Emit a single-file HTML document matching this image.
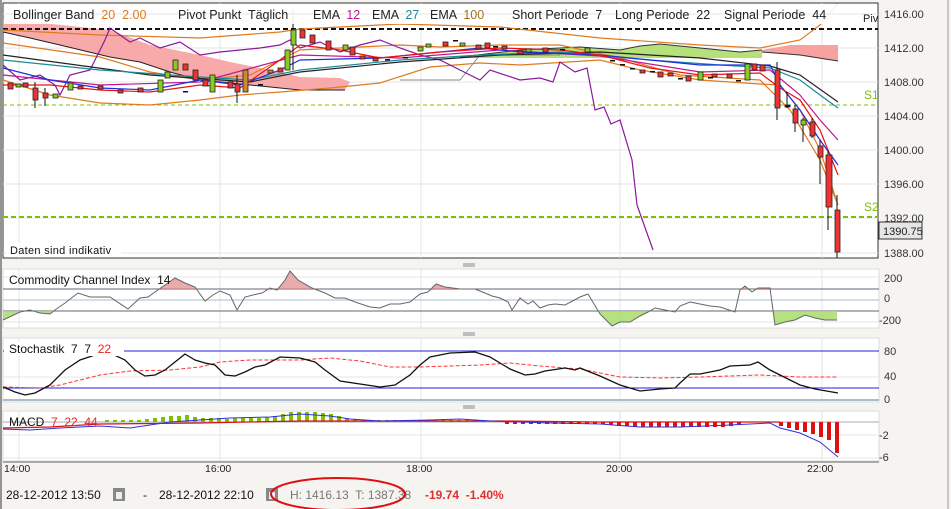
<!DOCTYPE html>
<html><head><meta charset="utf-8"><style>
body{margin:0;width:951px;height:509px;overflow:hidden;background:#f5f4f0;font-family:"Liberation Sans",sans-serif}
svg{position:absolute;left:0;top:0}
text{font-family:"Liberation Sans",sans-serif;white-space:pre}
</style></head><body>
<svg width="951" height="509" viewBox="0 0 951 509" xml:space="preserve">
<defs>
<clipPath id="cg"><rect x="3" y="311" width="876" height="20"/></clipPath>
<clipPath id="cr"><rect x="3" y="265" width="876" height="24"/></clipPath>
</defs>
<rect x="0" y="0" width="951" height="509" fill="#f5f4f0"/>
<line x1="1" y1="0" x2="1" y2="509" stroke="#333"/>
<line x1="948" y1="0" x2="948" y2="509" stroke="#999"/>
<rect x="3" y="3" width="875" height="255" fill="#fff" stroke="#333"/>
<g stroke="#e4e4e4" stroke-width="1">
<line x1="3" y1="14" x2="878" y2="14"/><line x1="3" y1="48" x2="878" y2="48"/><line x1="3" y1="82" x2="878" y2="82"/><line x1="3" y1="116" x2="878" y2="116"/><line x1="3" y1="150" x2="878" y2="150"/><line x1="3" y1="184" x2="878" y2="184"/><line x1="3" y1="218" x2="878" y2="218"/><line x1="3" y1="253" x2="878" y2="253"/>
<line x1="19" y1="3" x2="19" y2="258"/><line x1="220" y1="3" x2="220" y2="258"/><line x1="421" y1="3" x2="421" y2="258"/><line x1="620" y1="3" x2="620" y2="258"/><line x1="822" y1="3" x2="822" y2="258"/>
</g>
<polygon points="3,19 110,30 150,45 200,55 230,62 270,70 300,77 340,78 350,82 345,90 300,90 240,84 200,80 170,72 140,62 110,57 60,45 30,38 3,32" fill="#f7a1a1" opacity="0.9"/>
<polyline points="3,32 30,38 60,45 110,57 140,62 170,72 200,80 240,84 300,90 345,90" fill="none" stroke="#222"/>
<polygon points="460,57 520,50 580,47 620,50 640,46 660,44 700,48 740,52 762,50 762,58 700,58 600,58 500,58 470,58" fill="#b5e07a"/>
<polyline points="460,57 520,50 580,47 620,50 640,46 660,44 700,48 740,52 762,50" fill="none" stroke="#333"/>
<polygon points="762,50 790,45 838,45 838,61 800,55 762,52" fill="#f7a1a1"/>
<polyline points="762,52 800,55 838,61" fill="none" stroke="#333"/>
<polyline points="400,80 460,80 480,55 560,55" fill="none" stroke="#888"/>
<line x1="3" y1="29" x2="878" y2="29" stroke="#111" stroke-width="2" stroke-dasharray="5,3"/>
<line x1="3" y1="105" x2="878" y2="105" stroke="#7cc200" stroke-dasharray="4,3"/>
<line x1="3" y1="217" x2="878" y2="217" stroke="#7cc200" stroke-width="2" stroke-dasharray="5,3"/>
<g fill="none" stroke-width="1.2">
<polyline stroke="#e07a20" points="3,30 100,35 200,38 280,32 300,29 400,24 500,27 600,38 700,45 760,48 800,40 820,25 838,3"/>
<polyline stroke="#e07a20" points="3,80 50,95 100,103 150,105 200,100 240,95 280,92 330,88 380,83 430,67 480,63 520,65 600,60 640,70 700,80 760,84 780,85 800,110 820,150 838,205"/>
<polyline stroke="#e07a20" points="3,43 100,57 150,72 200,80 250,75 280,60 300,50 400,45 440,47 500,45 560,45 620,58 680,75 760,80 790,110 820,160 838,205"/>
<polyline stroke="#8a1a9a" points="3,65 20,80 40,75 55,85 60,95 70,75 90,70 105,40 110,28 130,42 140,38 160,48 180,42 200,55 220,52 240,50 260,48 280,45 290,40 300,48 320,42 340,52 360,45 380,40 400,48 420,55 440,60 460,70 480,80 490,70 520,80 540,78 553,82 560,62 575,72 587,68 595,110 604,107 611,124 620,120 632,160 637,205 653,250"/>
<polyline stroke="#222" points="3,55 150,75 250,82 300,72 400,62 500,55 600,52 700,58 770,66 800,75 838,102"/>
<polyline stroke="#1a8a9a" points="3,60 100,70 200,77 250,80 300,70 400,60 480,55 560,52 650,60 720,65 770,68 800,80 820,95 838,108"/>
<polyline stroke="#c0188a" points="3,75 100,85 200,82 300,55 400,58 500,50 600,56 700,72 770,70 800,95 820,120 838,140"/>
<polyline stroke="#2030e0" points="3,68 50,80 100,88 150,90 200,80 240,85 280,70 300,60 380,58 440,52 480,48 520,52 600,55 700,65 770,65 780,85 800,110 820,140 838,165"/>
<polyline stroke="#ee1111" points="3,85 50,85 100,90 150,92 200,85 240,88 280,60 300,45 340,50 380,58 440,52 500,48 560,50 600,55 650,68 700,75 760,73 780,88 800,100 820,130 838,175"/>
</g>
<g stroke="#111" stroke-width="1">
<line x1="35" y1="82" x2="35" y2="108"/><line x1="45" y1="88" x2="45" y2="106"/><line x1="237" y1="75" x2="237" y2="103"/><line x1="293" y1="10" x2="293" y2="70"/><line x1="777" y1="62" x2="777" y2="120"/><line x1="787" y1="92" x2="787" y2="108"/><line x1="795" y1="105" x2="795" y2="132"/><line x1="803" y1="118" x2="803" y2="142"/><line x1="812" y1="118" x2="812" y2="138"/><line x1="820" y1="140" x2="820" y2="184"/><line x1="828" y1="150" x2="828" y2="230"/><line x1="837" y1="195" x2="837" y2="258"/>
</g>
<g stroke="#222" stroke-width="0.8">
<rect x="8" y="83" width="5" height="6" fill="#e33"/><rect x="16" y="84" width="5" height="3" fill="#8c2"/><rect x="23" y="83" width="5" height="4" fill="#e33"/><rect x="33" y="88" width="5" height="12" fill="#e33"/><rect x="43" y="93" width="5" height="5" fill="#e33"/><rect x="53" y="94" width="5" height="4" fill="#8c2"/><rect x="68" y="83" width="5" height="7" fill="#8c2"/><rect x="78" y="86" width="5" height="3" fill="#e33"/><rect x="98" y="86" width="5" height="3" fill="#e33"/><rect x="118" y="90" width="5" height="3" fill="#e33"/><rect x="138" y="88" width="5" height="4" fill="#e33"/><rect x="158" y="80" width="5" height="12" fill="#8c2"/><rect x="165" y="72" width="5" height="6" fill="#8c2"/><rect x="173" y="60" width="5" height="10" fill="#8c2"/><rect x="183" y="64" width="5" height="6" fill="#e33"/><rect x="193" y="70" width="5" height="10" fill="#e33"/><rect x="203" y="80" width="5" height="6" fill="#e33"/><rect x="210" y="75" width="5" height="17" fill="#8c2"/><rect x="228" y="82" width="5" height="6" fill="#e33"/><rect x="235" y="84" width="5" height="8" fill="#e33"/><rect x="243" y="70" width="5" height="22" fill="#c83"/><rect x="268" y="70" width="5" height="3" fill="#c83"/><rect x="278" y="68" width="5" height="4" fill="#e33"/><rect x="285" y="50" width="5" height="20" fill="#8c2"/><rect x="291" y="30" width="5" height="15" fill="#8c2"/><rect x="300" y="30" width="5" height="8" fill="#e33"/><rect x="310" y="35" width="5" height="8" fill="#e33"/><rect x="326" y="41" width="5" height="9" fill="#e33"/><rect x="343" y="45" width="5" height="5" fill="#8c2"/><rect x="350" y="47" width="5" height="8" fill="#e33"/><rect x="360" y="56" width="5" height="3" fill="#e33"/><rect x="373" y="58" width="5" height="3" fill="#e33"/><rect x="418" y="47" width="5" height="4" fill="#8c2"/><rect x="426" y="44" width="5" height="3" fill="#8c2"/><rect x="443" y="42" width="5" height="4" fill="#e33"/><rect x="460" y="43" width="5" height="3" fill="#8c2"/><rect x="476" y="45" width="5" height="4" fill="#e33"/><rect x="485" y="43" width="5" height="5" fill="#e33"/><rect x="502" y="46" width="5" height="3" fill="#e33"/><rect x="518" y="51" width="5" height="3" fill="#e33"/><rect x="526" y="49" width="5" height="3" fill="#8c2"/><rect x="543" y="48" width="5" height="4" fill="#e33"/><rect x="585" y="48" width="5" height="4" fill="#8c2"/><rect x="640" y="70" width="5" height="3" fill="#e33"/><rect x="658" y="72" width="5" height="5" fill="#e33"/><rect x="668" y="73" width="5" height="3" fill="#e33"/><rect x="686" y="76" width="5" height="5" fill="#e33"/><rect x="698" y="72" width="5" height="8" fill="#8c2"/><rect x="712" y="74" width="5" height="3" fill="#e33"/><rect x="727" y="74" width="5" height="4" fill="#e33"/><rect x="745" y="64" width="5" height="16" fill="#8c2"/><rect x="752" y="64" width="5" height="6" fill="#e33"/><rect x="760" y="65" width="5" height="6" fill="#e33"/><rect x="775" y="70" width="5" height="38" fill="#e33"/><rect x="785" y="105" width="5" height="2" fill="#111"/><rect x="793" y="109" width="5" height="14" fill="#e33"/><rect x="801" y="120" width="5" height="5" fill="#8c2"/><rect x="810" y="122" width="5" height="14" fill="#e33"/><rect x="818" y="146" width="5" height="11" fill="#e33"/><rect x="826" y="155" width="6" height="52" fill="#e33"/><rect x="835" y="210" width="5" height="42" fill="#e33"/>
</g>
<g fill="#111"><rect x="183" y="91" width="5" height="1.5"/><rect x="258" y="84" width="5" height="1.5"/><rect x="385" y="59" width="5" height="1.5"/><rect x="403" y="57" width="5" height="1.5"/><rect x="453" y="40" width="5" height="1.5"/><rect x="493" y="46" width="5" height="1.5"/><rect x="560" y="49" width="5" height="1.5"/><rect x="610" y="60" width="5" height="1.5"/><rect x="620" y="64" width="5" height="1.5"/><rect x="630" y="68" width="5" height="1.5"/><rect x="650" y="71" width="5" height="1.5"/><rect x="678" y="78" width="5" height="1.5"/><rect x="708" y="77" width="5" height="1.5"/><rect x="736" y="80" width="5" height="1.5"/></g>
<rect x="4" y="4" width="856" height="20" fill="#fff" opacity="0.9"/>
<line x1="4" y1="14" x2="860" y2="14" stroke="#e4e4e4"/>
<g font-size="12.5" fill="#222">
<text x="13" y="19">Bollinger Band  <tspan fill="#e07a20">20  2.00</tspan></text>
<text x="178" y="19">Pivot Punkt  Täglich</text>
<text x="313" y="19">EMA  <tspan fill="#c0188a">12</tspan></text>
<text x="372" y="19">EMA  <tspan fill="#1a8a9a">27</tspan></text>
<text x="430" y="19">EMA  <tspan fill="#a0701a">100</tspan></text>
<text x="512" y="19">Short Periode  7</text>
<text x="615" y="19">Long Periode  22</text>
<text x="724" y="19">Signal Periode  44</text>
</g>
<text x="863" y="22" font-size="11" fill="#222">Piv</text>
<text x="864" y="99" font-size="12" fill="#7cc200">S1</text>
<text x="864" y="211" font-size="12" fill="#7cc200">S2</text>
<rect x="6" y="243" width="115" height="13" fill="#fff"/>
<text x="10" y="254" font-size="11" fill="#111" letter-spacing="0.3">Daten sind indikativ</text>
<g font-size="11" fill="#333">
<text x="884" y="18">1416.00</text><text x="884" y="52">1412.00</text><text x="884" y="86">1408.00</text><text x="884" y="120">1404.00</text><text x="884" y="154">1400.00</text><text x="884" y="188">1396.00</text><text x="884" y="222">1392.00</text><text x="884" y="257">1388.00</text>
</g>
<rect x="879" y="222" width="43" height="17" fill="#e6e6e6" stroke="#333"/>
<text x="883" y="235" font-size="11" fill="#222">1390.75</text>
<g stroke="#888"><line x1="463" y1="264" x2="475" y2="264"/><line x1="463" y1="266" x2="475" y2="266"/><line x1="463" y1="333" x2="475" y2="333"/><line x1="463" y1="335" x2="475" y2="335"/><line x1="463" y1="406" x2="475" y2="406"/><line x1="463" y1="408" x2="475" y2="408"/></g>
<rect x="3" y="269" width="876" height="59" fill="#fff" stroke="#ddd"/>
<g stroke="#e4e4e4"><line x1="3" y1="277" x2="879" y2="277"/><line x1="3" y1="322" x2="879" y2="322"/><line x1="19" y1="269" x2="19" y2="328"/><line x1="220" y1="269" x2="220" y2="328"/><line x1="421" y1="269" x2="421" y2="328"/><line x1="620" y1="269" x2="620" y2="328"/><line x1="822" y1="269" x2="822" y2="328"/></g>
<line x1="3" y1="289" x2="879" y2="289" stroke="#667"/>
<line x1="3" y1="300" x2="879" y2="300" stroke="#a8bccc"/>
<line x1="3" y1="311" x2="879" y2="311" stroke="#667"/>
<polygon clip-path="url(#cg)" fill="#a8dc6a" opacity="0.85" points="3,311 3,320 20,312 30,310 40,313 50,314 55,310 65,303 78,293 90,297 110,297 128,309 140,298 148,297 155,292 165,285 175,278 185,283 195,287 205,301 213,295 220,291 230,295 237,310 245,297 253,295 262,293 270,288 277,290 285,280 290,271 298,280 312,288 325,293 335,298 345,298 355,302 370,307 380,308 390,304 400,304 410,302 420,294 428,292 436,284 445,287 460,289 475,289 485,293 492,296 500,298 508,302 512,310 520,298 528,304 533,301 540,308 548,305 555,304 565,305 580,297 588,294 600,314 612,326 620,322 630,322 640,316 648,312 655,308 665,310 675,312 680,306 690,302 700,304 710,306 720,307 735,312 740,290 745,286 752,292 758,288 770,288 775,325 785,322 795,320 805,315 815,318 825,320 837,320 837,311"/>
<polygon clip-path="url(#cr)" fill="#e08888" opacity="0.7" points="3,289 3,320 20,312 30,310 40,313 50,314 55,310 65,303 78,293 90,297 110,297 128,309 140,298 148,297 155,292 165,285 175,278 185,283 195,287 205,301 213,295 220,291 230,295 237,310 245,297 253,295 262,293 270,288 277,290 285,280 290,271 298,280 312,288 325,293 335,298 345,298 355,302 370,307 380,308 390,304 400,304 410,302 420,294 428,292 436,284 445,287 460,289 475,289 485,293 492,296 500,298 508,302 512,310 520,298 528,304 533,301 540,308 548,305 555,304 565,305 580,297 588,294 600,314 612,326 620,322 630,322 640,316 648,312 655,308 665,310 675,312 680,306 690,302 700,304 710,306 720,307 735,312 740,290 745,286 752,292 758,288 770,288 775,325 785,322 795,320 805,315 815,318 825,320 837,320 837,289"/>
<polyline fill="none" stroke="#666" points="3,320 20,312 30,310 40,313 50,314 55,310 65,303 78,293 90,297 110,297 128,309 140,298 148,297 155,292 165,285 175,278 185,283 195,287 205,301 213,295 220,291 230,295 237,310 245,297 253,295 262,293 270,288 277,290 285,280 290,271 298,280 312,288 325,293 335,298 345,298 355,302 370,307 380,308 390,304 400,304 410,302 420,294 428,292 436,284 445,287 460,289 475,289 485,293 492,296 500,298 508,302 512,310 520,298 528,304 533,301 540,308 548,305 555,304 565,305 580,297 588,294 600,314 612,326 620,322 630,322 640,316 648,312 655,308 665,310 675,312 680,306 690,302 700,304 710,306 720,307 735,312 740,290 745,286 752,292 758,288 770,288 775,325 785,322 795,320 805,315 815,318 825,320 837,320"/>
<text x="9" y="284" font-size="12" fill="#111">Commodity Channel Index  14</text>
<g font-size="11" fill="#333"><text x="884" y="282">200</text><text x="884" y="302">0</text><text x="879" y="324">-200</text></g>
<rect x="3" y="338" width="876" height="64" fill="#fff" stroke="#ddd"/>
<g stroke="#e4e4e4"><line x1="3" y1="377" x2="879" y2="377"/><line x1="19" y1="338" x2="19" y2="402"/><line x1="220" y1="338" x2="220" y2="402"/><line x1="421" y1="338" x2="421" y2="402"/><line x1="620" y1="338" x2="620" y2="402"/><line x1="822" y1="338" x2="822" y2="402"/></g>
<line x1="3" y1="400" x2="879" y2="400" stroke="#a8bccc" stroke-width="2"/>
<line x1="3" y1="351" x2="879" y2="351" stroke="#2020d0"/>
<line x1="3" y1="388" x2="879" y2="388" stroke="#2020d0"/>
<polyline fill="none" stroke="#f33" stroke-dasharray="4,2" points="3,387 40,388 60,385 80,380 100,375 130,371 170,370 200,367 220,362 250,360 300,360 330,358 360,361 390,367 420,367 450,366 480,365 510,363 540,366 580,369 620,377 660,378 700,377 760,375 800,377 838,377"/>
<polyline fill="none" stroke="#111" stroke-width="1.3" points="3,387 15,392 25,395 35,393 50,385 65,370 80,360 95,355 110,353 125,360 135,370 145,376 155,375 165,370 175,362 185,354 195,360 205,363 215,365 225,375 235,376 245,372 255,367 265,365 280,357 300,358 315,362 325,370 340,381 380,387 395,385 410,375 420,365 430,357 450,353 475,352 490,357 500,363 510,369 525,375 535,374 545,371 565,368 575,370 580,368 600,376 620,385 640,391 660,389 675,388 680,383 690,374 700,374 710,372 720,370 730,366 750,365 758,362 770,370 780,375 790,380 800,385 815,389 838,393"/>
<rect x="4" y="342" width="120" height="14" fill="#fff"/>
<text x="9" y="353" font-size="12" fill="#111">Stochastik  7  7  <tspan fill="#e22">22</tspan></text>
<g font-size="11" fill="#333"><text x="884" y="355">80</text><text x="884" y="380">40</text><text x="884" y="403">0</text></g>
<rect x="3" y="411" width="876" height="50" fill="#fff" stroke="#ddd"/>
<g stroke="#e4e4e4"><line x1="3" y1="435" x2="879" y2="435"/><line x1="3" y1="458" x2="879" y2="458"/><line x1="19" y1="411" x2="19" y2="461"/><line x1="220" y1="411" x2="220" y2="461"/><line x1="421" y1="411" x2="421" y2="461"/><line x1="620" y1="411" x2="620" y2="461"/><line x1="822" y1="411" x2="822" y2="461"/></g>
<line x1="3" y1="422" x2="879" y2="422" stroke="#a8aab4"/>
<g fill="#7cc200">
<rect x="105" y="420" width="4" height="2"/><rect x="113" y="420" width="4" height="2"/><rect x="121" y="420" width="4" height="2"/><rect x="129" y="420" width="4" height="2"/><rect x="137" y="420" width="4" height="2"/><rect x="145" y="419" width="4" height="3"/><rect x="153" y="418" width="4" height="4"/><rect x="161" y="417" width="4" height="5"/><rect x="169" y="416" width="4" height="6"/><rect x="177" y="416" width="4" height="6"/><rect x="185" y="415" width="4" height="7"/><rect x="193" y="417" width="4" height="5"/><rect x="201" y="418" width="4" height="4"/><rect x="209" y="418" width="4" height="4"/><rect x="217" y="418" width="4" height="4"/><rect x="225" y="419" width="4" height="3"/><rect x="233" y="418" width="4" height="4"/><rect x="241" y="418" width="4" height="4"/><rect x="249" y="418" width="4" height="4"/><rect x="257" y="418" width="4" height="4"/><rect x="265" y="417" width="4" height="5"/><rect x="273" y="416" width="4" height="6"/><rect x="281" y="414" width="4" height="8"/><rect x="289" y="412" width="4" height="10"/><rect x="297" y="412" width="4" height="10"/><rect x="305" y="412" width="4" height="10"/><rect x="313" y="412" width="4" height="10"/><rect x="321" y="413" width="4" height="9"/><rect x="329" y="414" width="4" height="8"/><rect x="337" y="416" width="4" height="6"/><rect x="345" y="418" width="4" height="4"/><rect x="353" y="419" width="4" height="3"/><rect x="361" y="420" width="4" height="2"/><rect x="369" y="420" width="4" height="2"/><rect x="377" y="420" width="4" height="2"/><rect x="385" y="420" width="4" height="2"/><rect x="393" y="420" width="4" height="2"/><rect x="401" y="420" width="4" height="2"/><rect x="409" y="420" width="4" height="2"/><rect x="417" y="420" width="4" height="2"/><rect x="425" y="420" width="4" height="2"/><rect x="433" y="420" width="4" height="2"/><rect x="441" y="420" width="4" height="2"/><rect x="449" y="420" width="4" height="2"/><rect x="457" y="420" width="4" height="2"/><rect x="465" y="420" width="4" height="2"/><rect x="473" y="420" width="4" height="2"/><rect x="481" y="420" width="4" height="2"/>
</g>
<g fill="#dd1111">
<rect x="505" y="422" width="4" height="2"/><rect x="513" y="422" width="4" height="2"/><rect x="521" y="422" width="4" height="2"/><rect x="529" y="422" width="4" height="2"/><rect x="537" y="422" width="4" height="2"/><rect x="545" y="422" width="4" height="2"/><rect x="553" y="422" width="4" height="2"/><rect x="561" y="422" width="4" height="2"/><rect x="569" y="422" width="4" height="2"/><rect x="577" y="422" width="4" height="2"/><rect x="585" y="422" width="4" height="2"/><rect x="593" y="422" width="4" height="2"/><rect x="601" y="422" width="4" height="2"/><rect x="609" y="422" width="4" height="3"/><rect x="617" y="422" width="4" height="4"/><rect x="625" y="422" width="4" height="4"/><rect x="633" y="422" width="4" height="5"/><rect x="641" y="422" width="4" height="5"/><rect x="649" y="422" width="4" height="5"/><rect x="657" y="422" width="4" height="5"/><rect x="665" y="422" width="4" height="5"/><rect x="673" y="422" width="4" height="5"/><rect x="681" y="422" width="4" height="5"/><rect x="689" y="422" width="4" height="5"/><rect x="697" y="422" width="4" height="5"/><rect x="705" y="422" width="4" height="5"/><rect x="713" y="422" width="4" height="5"/><rect x="721" y="422" width="4" height="5"/><rect x="729" y="422" width="4" height="4"/><rect x="737" y="422" width="4" height="3"/><rect x="779" y="422" width="4" height="4"/><rect x="787" y="422" width="4" height="6"/><rect x="795" y="422" width="4" height="8"/><rect x="803" y="422" width="4" height="10"/><rect x="811" y="422" width="4" height="12"/><rect x="819" y="422" width="4" height="15"/><rect x="827" y="422" width="4" height="18"/><rect x="835" y="422" width="4" height="31"/>
</g>
<polyline fill="none" stroke="#dd1111" stroke-width="1.3" points="3,428 50,427 100,424 200,423 300,421 400,421 500,421 600,422 700,422 780,422"/>
<polyline fill="none" stroke="#3030e0" points="3,429 30,430 60,428 100,426 130,428 150,425 170,422 200,420 230,418 270,417 300,414 330,416 350,419 380,421 430,420 460,419 490,421 550,423 600,424 640,427 680,427 730,425 770,423 780,428 800,433 820,442 838,457"/>
<text x="9" y="426" font-size="12" fill="#111">MACD  <tspan fill="#e22">7  22  44</tspan></text>
<g font-size="11" fill="#333"><text x="879" y="439">-2</text><text x="879" y="461">-6</text></g>
<line x1="3" y1="462" x2="879" y2="462" stroke="#666"/>
<g font-size="10.5" fill="#222"><text x="4" y="472">14:00</text><text x="205" y="472">16:00</text><text x="406" y="472">18:00</text><text x="606" y="472">20:00</text><text x="807" y="472">22:00</text></g>
<g font-size="12">
<text x="6" y="499" fill="#111">28-12-2012 13:50</text>
<rect x="113" y="488" width="12" height="13" fill="#888"/><rect x="116" y="492" width="6" height="7" fill="#eee"/>
<text x="143" y="499" fill="#111">-</text>
<text x="159" y="499" fill="#111">28-12-2012 22:10</text>
<rect x="266" y="488" width="12" height="13" fill="#888"/><rect x="269" y="492" width="6" height="7" fill="#eee"/>
<text x="290" y="499" fill="#777">H: 1416.13  T: 1387.38</text>
<text x="425" y="499" fill="#e03030" font-weight="bold">-19.74  -1.40%</text>
</g>
<ellipse cx="338" cy="494" rx="67" ry="16" fill="none" stroke="#e01010" stroke-width="2"/>
</svg>
</body></html>
